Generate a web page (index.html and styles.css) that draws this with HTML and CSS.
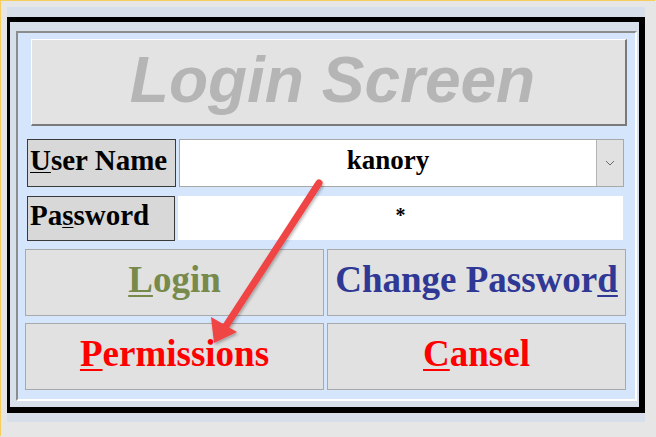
FILE: index.html
```html
<!DOCTYPE html>
<html>
<head>
<meta charset="utf-8">
<link rel="stylesheet" href="styles.css">
</head>
<body>
<div class="panel">
  <div class="frame">
    <div class="inner">
      <div class="title">Login Screen</div>
      <div class="row row1">
        <div class="label lbl-user"><u>U</u>ser Name</div>
        <div class="combo">
          <div class="combo-text">kanory</div>
          <div class="combo-btn">
            <svg width="10" height="6" viewBox="0 0 10 6"><path d="M1 1 L5 5 L9 1" fill="none" stroke="#6a6a6a" stroke-width="1"/></svg>
          </div>
        </div>
      </div>
      <div class="row row2">
        <div class="label lbl-pass">Pa<u>s</u>sword</div>
        <div class="field">*</div>
      </div>
      <div class="buttons">
        <div class="btn btn-login"><span><u>L</u>ogin</span></div>
        <div class="btn btn-change"><span>Change Passwor<u>d</u></span></div>
        <div class="btn btn-red"><span><u>P</u>ermissions</span></div>
        <div class="btn btn-red"><span><u>C</u>ansel</span></div>
      </div>
    </div>
  </div>
</div>
<svg class="arrow" width="656" height="437" viewBox="0 0 656 437">
  <defs>
    <filter id="sh" x="-20%" y="-20%" width="140%" height="140%">
      <feDropShadow dx="1" dy="2" stdDeviation="1.5" flood-color="#000" flood-opacity="0.3"/>
    </filter>
  </defs>
  <g filter="url(#sh)">
    <line x1="318" y1="182" x2="225" y2="325" stroke="#f04444" stroke-width="7" stroke-linecap="round"/>
    <polygon points="213,342 210,316 236,331" fill="#f04444"/>
  </g>
</svg>
</body>
</html>
```
FILE: styles.css
```css
html, body {
  margin: 0;
  padding: 0;
}
body {
  width: 655px;
  height: 436px;
  background: #e6e6e6;
  border-top: 1px solid #f7cd5c;
  border-left: 1px solid #f7cd5c;
  padding: 6px 0 0 6px;
  box-sizing: border-box;
  position: relative;
  overflow: hidden;
}
u {
  text-decoration-thickness: 2px;
  text-underline-offset: 3px;
}
.panel {
  width: 638px;
  height: 415px;
  background: #d6dfea;
  padding-top: 10px;
  box-sizing: border-box;
}
.frame {
  width: 638px;
  height: 396px;
  box-sizing: border-box;
  border-style: solid;
  border-color: #000;
  border-width: 5px 6px 6px 3px;
  background: #d6dfea;
  padding: 9px 2px 6px 6px;
}
.inner {
  width: 621px;
  height: 370px;
  box-sizing: border-box;
  background: #d4e5fc;
  border-style: solid;
  border-width: 2px;
  border-color: #8c8c8c #ffffff #ffffff #8c8c8c;
}
.title {
  margin: 6px 0 0 13px;
  width: 596px;
  height: 87px;
  box-sizing: border-box;
  background: #e3e3e3;
  border-style: solid;
  border-width: 1px 2px 2px 1px;
  border-color: #ffffff #7a7a7a #7a7a7a #ffffff;
  display: flex;
  align-items: center;
  justify-content: center;
  padding: 0 0 4px 8px;
  font-family: "Liberation Sans", Arial, sans-serif;
  font-weight: bold;
  font-style: italic;
  font-size: 64px;
  color: #b5b5b5;
}
.row {
  display: flex;
  margin-left: 9px;
  gap: 3px;
}
.row1 {
  margin-top: 13px;
  height: 48px;
}
.row2 {
  margin-top: 9px;
  height: 45px;
}
.label {
  box-sizing: border-box;
  border: 1px solid #3a3a3a;
  background: #d8d8d8;
  display: flex;
  align-items: center;
  padding: 0 0 5px 2px;
  font-family: "Liberation Serif", "Times New Roman", serif;
  font-weight: bold;
  font-size: 29px;
  color: #000;
  white-space: nowrap;
}
.label u {
  text-decoration-thickness: 1px;
  text-underline-offset: 2px;
}
.lbl-user {
  width: 149px;
}
.lbl-pass {
  width: 148px;
  padding-bottom: 6px;
}
.combo {
  width: 445px;
  box-sizing: border-box;
  border: 1px solid #a8a8a8;
  background: #fff;
  display: flex;
}
.combo-text {
  flex: 1;
  display: flex;
  align-items: center;
  justify-content: center;
  padding-bottom: 5px;
  font-family: "Liberation Serif", "Times New Roman", serif;
  font-weight: bold;
  font-size: 27px;
  color: #000;
}
.combo-btn {
  width: 26px;
  background: #e1e1e1;
  border-left: 1px solid #b4b4b4;
  display: flex;
  align-items: center;
  justify-content: center;
}
.field {
  width: 445px;
  height: 44px;
  background: #fff;
  text-align: center;
  font-family: "Liberation Serif", "Times New Roman", serif;
  font-weight: bold;
  font-size: 20px;
  line-height: 20px;
  padding-top: 9px;
  box-sizing: border-box;
  color: #000;
}
.buttons {
  margin: 8px 0 0 7px;
  display: grid;
  grid-template-columns: 299px 299px;
  grid-template-rows: 67px 67px;
  column-gap: 3px;
  row-gap: 7px;
}
.btn {
  box-sizing: border-box;
  border: 1px solid #a9a9a9;
  background: #e1e1e1;
  display: flex;
  align-items: center;
  justify-content: center;
  padding-bottom: 6px;
  font-family: "Liberation Serif", "Times New Roman", serif;
  font-weight: bold;
  font-size: 37px;
  white-space: nowrap;
}
.btn-login {
  color: #778a4b;
}
.btn-change {
  color: #2f3894;
}
.btn-red {
  color: #ff0000;
}
.arrow {
  position: absolute;
  left: 0;
  top: 0;
  pointer-events: none;
}
```
